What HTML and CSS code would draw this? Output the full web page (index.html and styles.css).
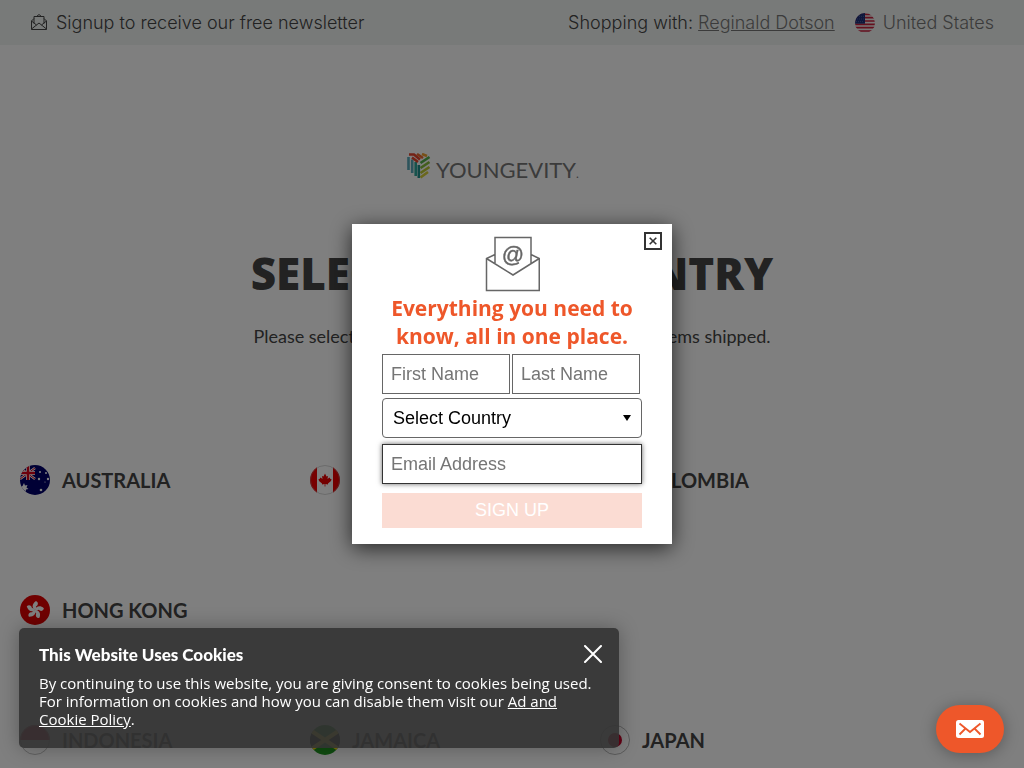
FILE: index.html
```html
<!DOCTYPE html>
<html lang="en">
<head>
    <meta charset="UTF-8">
    <meta name="viewport" content="width=device-width, initial-scale=1.0">
    <title>Youngevity - Select Your Country</title>
    <link rel="stylesheet" href="styles.css">
</head>
<body>
    <header class="top-bar">
        <a href="#" class="newsletter-link">
            <svg class="newsletter-icon" viewBox="0 0 18 18" fill="none" stroke="currentColor">
                <path d="M4 4.500L1.500 7V15.500H16.500V7L14 4.500M4 9.500V2.500H14V9.500M6.500 2.500L9 .5L11.500 2.500M1.500 7L6.500 11M16.500 7L11.500 11M1.500 15L9 9L16.500 15"/>
            </svg>
            <span>Signup to receive our free newsletter</span>
        </a>
        <div class="top-right">
            <span>Shopping with: <a href="#" class="associate">Reginald Dotson</a></span>
            <a href="#" class="region">
                <svg class="region-flag" viewBox="0 0 30 30">
                    <clipPath id="round"><circle cx="15" cy="15" r="15"/></clipPath>
                    <g clip-path="url(#round)">
                        <rect width="30" height="30" fill="#eee"/>
                        <path d="M0 2H30M0 7H30M0 12H30M0 17H30M0 22H30M0 27H30" stroke="#c8203c" stroke-width="2.500"/>
                        <rect width="15" height="16" fill="#1c2f78"/>
                        <path d="M3 5H14M3 9H14M2 13H14" stroke="#8d9ac4" stroke-dasharray="1 2"/>
                    </g>
                </svg>
                <span>United States</span>
            </a>
        </div>
    </header>

    <main class="page">
        <div class="logo">
            <svg class="logo-mark" viewBox="0 0 24 26" fill="none" stroke-width="2.600">
                <path d="M1.500 4V17M5.200 6.500V20" stroke="#5ba9b8"/>
                <path d="M8.700 9V23" stroke="#2fa79a"/>
                <path d="M11.800 12V25" stroke="#1f8f8c"/>
                <path d="M2 1.500L7 1.500L13 6.500" stroke="#e8452c"/>
                <path d="M5 4.500L11 9" stroke="#e8452c"/>
                <path d="M10 1L16 5" stroke="#ec6a2f"/>
                <path d="M15 1L20 3" stroke="#f0a030"/>
                <path d="M13.500 10L22.500 4" stroke="#55b04c"/>
                <path d="M13.500 15L22.500 9" stroke="#86bd3c"/>
                <path d="M13.500 20L22.500 14" stroke="#b9c832"/>
                <path d="M13.500 24.500L21 19" stroke="#d6cf3a"/>
            </svg>
            <span class="logo-text">YOUNGEVITY<small>.</small></span>
        </div>
        <h1>SELECT YOUR COUNTRY</h1>
        <p class="intro">Please select the country where you would like the items shipped.</p>

        <div class="countries">
            <a href="#" class="country">
                <svg class="flag" viewBox="0 0 30 30">
                    <g clip-path="url(#round)">
                        <rect width="30" height="30" fill="#00006b"/>
                        <path d="M0 3L15 14M15 3L0 14" stroke="#fff" stroke-width="2.500"/>
                        <path d="M0 3L15 14M15 3L0 14" stroke="#d80018"/>
                        <path d="M0 8H15M8 0V15" stroke="#fff" stroke-width="4"/>
                        <path d="M0 8H15M8 0V15" stroke="#d80018" stroke-width="2.500"/>
                        <path d="M4 18L5 20.500L7.500 20L6.500 22.500L8.500 24L6 24.500L5.500 27L4 25L1 26L2 23.500L0 22L2.500 21Z" fill="#fff"/>
                        <g fill="#fff"><circle cx="20" cy="7" r="1"/><circle cx="26" cy="8" r="1"/><circle cx="19" cy="14" r="1.200"/><circle cx="28" cy="14" r="1.200"/><circle cx="25" cy="17" r=".6"/><circle cx="21" cy="25" r="1.300"/></g>
                    </g>
                </svg>
                <span>AUSTRALIA</span>
            </a>
            <a href="#" class="country">
                <svg class="flag" viewBox="0 0 30 30">
                    <g clip-path="url(#round)">
                        <rect width="30" height="30" fill="#fff"/>
                        <path d="M0 0H7V30H0ZM23 0H30V30H23Z" fill="#f00000"/>
                        <path d="M15 8.500L16.500 11.500L18 11L17.500 14L19.500 12.500L20.500 14H21.500L21 16L18 18.500V19.500L15.400 19V21.500H14.600V19L12 19.500V18.500L9 16L8.500 14H9.500L10.500 12.500L12.500 14L12 11L13.500 11.500Z" fill="#e80000"/>
                    </g>
                    <circle cx="15" cy="15" r="14.500" fill="none" stroke="#999" stroke-opacity=".4"/>
                </svg>
                <span>CANADA</span>
            </a>
            <a href="#" class="country">
                <svg class="flag" viewBox="0 0 30 30">
                    <g clip-path="url(#round)">
                        <rect width="30" height="15" fill="#fcd116"/>
                        <rect y="15" width="30" height="8" fill="#003893"/>
                        <rect y="23" width="30" height="7" fill="#ce1126"/>
                    </g>
                </svg>
                <span>COLOMBIA</span>
            </a>
            <a href="#" class="country first-in-row">
                <svg class="flag" viewBox="0 0 30 30">
                    <circle cx="15" cy="15" r="15" fill="#e00000"/>
                    <g fill="#fff">
                        <path id="petal" d="M15 15C11.500 13 12 8.500 16 6C19 7.500 18 10.500 16 11.500C16.500 13 16 14 15 15Z"/>
                        <use href="#petal" transform="rotate(72 15 15)"/>
                        <use href="#petal" transform="rotate(144 15 15)"/>
                        <use href="#petal" transform="rotate(216 15 15)"/>
                        <use href="#petal" transform="rotate(288 15 15)"/>
                    </g>
                </svg>
                <span>HONG KONG</span>
            </a>
            <a href="#" class="country first-in-row">
                <svg class="flag" viewBox="0 0 30 30">
                    <g clip-path="url(#round)">
                        <rect width="30" height="30" fill="#fff"/>
                        <rect width="30" height="15" fill="#d8102c"/>
                    </g>
                    <circle cx="15" cy="15" r="14.500" fill="none" stroke="#999" stroke-opacity=".6"/>
                </svg>
                <span>INDONESIA</span>
            </a>
            <a href="#" class="country">
                <svg class="flag" viewBox="0 0 30 30">
                    <g clip-path="url(#round)">
                        <rect width="30" height="30" fill="#209a20"/>
                        <path d="M0 5L15 15L0 25ZM30 5L15 15L30 25Z" fill="#000"/>
                        <path d="M0 5L30 25M30 5L0 25" stroke="#fce016" stroke-width="4"/>
                    </g>
                </svg>
                <span>JAMAICA</span>
            </a>
            <a href="#" class="country">
                <svg class="flag" viewBox="0 0 30 30">
                    <circle cx="15" cy="15" r="14.500" fill="#fff" stroke="#999" stroke-opacity=".7"/>
                    <circle cx="15" cy="15" r="7" fill="#c80028"/>
                </svg>
                <span>JAPAN</span>
            </a>
        </div>
    </main>

    <div class="overlay">
        <form class="newsletter-modal">
            <button type="button" class="modal-close" aria-label="Close">
                <svg viewBox="0 0 8 8" fill="none" stroke="currentColor" stroke-width="1.600"><path d="M.7 .7L7.300 7.300M7.300 .7L.7 7.300"/></svg>
            </button>
            <svg class="modal-icon" viewBox="0 0 56 56" fill="none" stroke="#666" stroke-width="1.500">
                <path d="M11 18.500L2.500 22.500V54.500H55.250V22.500L47 18.500M2.500 22.500L29 39L55.250 22.500M11 27V1.500H47V27"/>
                <text x="29" y="26" class="at-sign">@</text>
            </svg>
            <h2>Everything you need to know, all in one place.</h2>
            <div class="name-row">
                <input type="text" class="field" placeholder="First Name" aria-label="First Name">
                <input type="text" class="field" placeholder="Last Name" aria-label="Last Name">
            </div>
            <div class="select-wrap">
                <select class="country-select" aria-label="Select Country">
                    <option>Select Country</option>
                    <option>United States</option>
                    <option>Canada</option>
                </select>
                <svg class="select-arrow" viewBox="0 0 8 6"><path d="M0 0H8L4 6Z"/></svg>
            </div>
            <input type="email" class="field email-field" placeholder="Email Address" aria-label="Email Address" autofocus>
            <button type="submit" class="signup-button">SIGN UP</button>
        </form>
    </div>

    <div class="cookie-banner">
        <div class="cookie-head">
            <h3>This Website Uses Cookies</h3>
            <button type="button" class="cookie-close" aria-label="Close">
                <svg viewBox="0 0 18 18" fill="none" stroke="currentColor" stroke-width="2" stroke-linecap="round"><path d="M1 1L17 17M17 1L1 17"/></svg>
            </button>
        </div>
        <p>By continuing to use this website, you are giving consent to cookies being used. For information on cookies and how you can disable them visit our <a href="#">Ad and Cookie Policy</a>.</p>
    </div>

    <button type="button" class="chat-button" aria-label="Contact us">
        <svg viewBox="0 0 28 18" fill="none">
            <rect width="28" height="18" rx="2.500" fill="#fff"/>
            <path d="M3.500 3.500L14 12L24.500 3.500M3.500 14.500L9 9M24.500 14.500L19 9" stroke="#ee572a" stroke-width="1.800"/>
        </svg>
    </button>
</body>
</html>
```
FILE: styles.css
```css
* {
    box-sizing: border-box;
}
body {
    margin: 0;
    height: 100vh;
    overflow: hidden;
    background-color: #fff;
    color: #444;
    font-family: "Open Sans", sans-serif;
}
a {
    color: inherit;
    text-decoration: none;
}
button {
    border: none;
    padding: 0;
    cursor: pointer;
}
svg {
    display: block;
}
h1, h2, h3, p {
    margin: 0;
}

/* Top bar */
.top-bar {
    display: flex;
    justify-content: space-between;
    align-items: center;
    height: 45px;
    padding: 0 30px;
    background-color: #f0f4f2;
    font-family: Inter, sans-serif;
    font-size: 18px;
    font-weight: 300;
}
.newsletter-link, .top-right, .region {
    display: flex;
    align-items: center;
    gap: 8px;
}
.top-right {
    gap: 20px;
}
.newsletter-icon {
    width: 18px;
    height: 18px;
}
.associate {
    color: #777;
    text-decoration: underline;
}
.region {
    color: #777;
}
.region-flag {
    width: 20px;
    height: 20px;
}

/* Country picker */
.page {
    padding: 108px 20px 0;
}
.logo {
    display: flex;
    justify-content: center;
    align-items: flex-start;
    gap: 5px;
    height: 30px;
    padding-right: 38px;
}
.logo-mark {
    width: 24px;
    height: 26px;
}
.logo-text {
    padding-top: 2px;
    color: #777;
    font-family: Lato, sans-serif;
    font-size: 22px;
    line-height: 30px;
}
.logo-text small {
    font-size: 12px;
}
h1 {
    margin-top: 60px;
    font-size: 44px;
    font-weight: 800;
    line-height: 60px;
    text-align: center;
}
.intro {
    margin-top: 20px;
    font-family: Lato, sans-serif;
    font-size: 18px;
    line-height: 26px;
    text-align: center;
}
.countries {
    display: grid;
    grid-template-columns: repeat(auto-fill, 250px);
    gap: 100px 40px;
    margin-top: 116px;
}
.country {
    display: flex;
    align-items: center;
    gap: 12px;
    height: 30px;
    font-family: Lato, sans-serif;
    font-size: 20px;
    font-weight: 700;
}
.first-in-row {
    grid-column-start: 1;
}
.flag {
    width: 30px;
    height: 30px;
}

/* Newsletter popup */
.overlay {
    display: flex;
    justify-content: center;
    align-items: center;
    position: fixed;
    inset: 0;
    background-color: rgba(0, 0, 0, 0.5);
    z-index: 10;
}
.newsletter-modal {
    position: relative;
    width: 320px;
    padding: 12px 30px 16px;
    background-color: #fff;
    box-shadow: 0 4px 20px rgba(0, 0, 0, 0.7);
}
.modal-close {
    display: flex;
    justify-content: center;
    align-items: center;
    position: absolute;
    top: 8px;
    right: 10px;
    width: 18px;
    height: 18px;
    border: 2px solid #333;
    background-color: #fff;
    color: #333;
}
.modal-close svg {
    width: 8px;
    height: 8px;
}
.modal-icon {
    width: 56px;
    height: 56px;
    margin: 0 auto;
}
.at-sign {
    fill: #666;
    stroke-width: 0.4px;
    font-family: "Liberation Sans", sans-serif;
    font-size: 22px;
    text-anchor: middle;
}
h2 {
    margin: 2px 0 4px;
    color: #ee572a;
    font-size: 21px;
    font-weight: 700;
    line-height: 28px;
    text-align: center;
}
.name-row {
    display: flex;
    gap: 2px;
    padding-right: 2px;
}
.field, .country-select {
    width: 100%;
    min-width: 0;
    height: 40px;
    padding: 0 8px;
    border: 1px solid #666;
    border-radius: 0;
    background-color: #fff;
    font-family: "Liberation Sans", sans-serif;
    font-size: 18px;
}
.field::placeholder {
    color: #757575;
}
.select-wrap {
    position: relative;
    margin: 4px 0 6px;
}
.country-select {
    display: block;
    appearance: none;
    padding: 0 10px;
    border-radius: 4px;
    color: #000;
}
.select-arrow {
    position: absolute;
    top: 17px;
    right: 11px;
    width: 8px;
    height: 6px;
    pointer-events: none;
}
.email-field {
    display: block;
    border-color: #333;
    outline: none;
    box-shadow: 0 0 5px rgba(0, 0, 0, 0.6);
}
.signup-button {
    width: 100%;
    height: 35px;
    margin-top: 9px;
    background-color: #fbdcd3;
    color: #fff;
    font-family: "Liberation Sans", sans-serif;
    font-size: 18px;
}

/* Cookie notice */
.cookie-banner {
    position: fixed;
    left: 19px;
    bottom: 20px;
    width: 600px;
    max-width: calc(100% - 38px);
    padding: 16px 16px 20px 20px;
    border-radius: 5px;
    background-color: rgba(51, 51, 51, 0.9);
    box-shadow: 0 0 20px rgba(0, 0, 0, 0.3);
    color: #fff;
    font-size: 15px;
    line-height: 18px;
    z-index: 20;
}
.cookie-head {
    display: flex;
    justify-content: space-between;
    margin-bottom: 8px;
}
.cookie-head h3 {
    font-family: Lato, sans-serif;
    font-size: 17px;
    font-weight: 900;
    line-height: 22px;
}
.cookie-close {
    width: 20px;
    height: 20px;
    background: none;
    color: #fff;
}
.cookie-close svg {
    width: 18px;
    height: 18px;
    margin: 0 auto;
}
.cookie-banner a {
    text-decoration: underline;
}

/* Contact button */
.chat-button {
    display: flex;
    justify-content: center;
    align-items: center;
    position: fixed;
    right: 20px;
    bottom: 15px;
    width: 68px;
    height: 48px;
    border-radius: 24px;
    background-color: #ee572a;
    box-shadow: 0 2px 16px rgba(0, 0, 0, 0.3);
    z-index: 20;
}
.chat-button svg {
    width: 28px;
    height: 18px;
}
```
